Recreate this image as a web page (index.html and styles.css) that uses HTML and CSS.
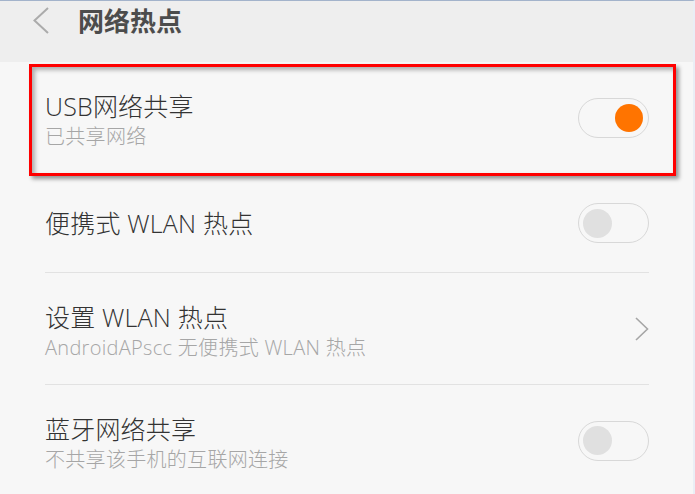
FILE: index.html
```html
<!doctype html>
<html>
    <head>
        <meta charset="utf-8">
        <title>网络热点</title>
        <link rel="stylesheet" href="styles.css">
    </head>
    <body>
        <div class="screen">
            <header class="titlebar">
                <svg class="back" width="16" height="27" viewBox="0 0 16 27">
                    <polyline points="15,1 1.5,13.5 15,26" fill="none" stroke="#ababab" stroke-width="2"/>
                </svg>
                <h1>网络热点</h1>
            </header>
            <ul class="list">
                <li class="row tall">
                    <div class="text">
                        <div class="title">USB网络共享</div>
                        <div class="summary">已共享网络</div>
                    </div>
                    <span class="switch on"><span class="knob"></span></span>
                </li>
                <li class="row">
                    <div class="text">
                        <div class="title">便携式 WLAN 热点</div>
                    </div>
                    <span class="switch"><span class="knob"></span></span>
                </li>
                <li class="row tall">
                    <div class="text">
                        <div class="title">设置 WLAN 热点</div>
                        <div class="summary">AndroidAPscc 无便携式 WLAN 热点</div>
                    </div>
                    <svg class="more" width="14" height="24" viewBox="0 0 14 24">
                        <polyline points="1,1 12.5,12 1,23" fill="none" stroke="#a6a6a6" stroke-width="1.6"/>
                    </svg>
                </li>
                <li class="row tall">
                    <div class="text">
                        <div class="title">蓝牙网络共享</div>
                        <div class="summary">不共享该手机的互联网连接</div>
                    </div>
                    <span class="switch"><span class="knob"></span></span>
                </li>
            </ul>
            <div class="highlight"></div>
        </div>
    </body>
</html>
```

FILE: styles.css
```css
html,
body {
    margin: 0;
    padding: 0;
    background-color: #f7f7f7;
}

* {
    font-family: "Open Sans", "Noto Sans CJK SC", sans-serif;
    box-sizing: border-box;
}

.screen {
    position: relative;
    width: 695px;
    height: 494px;
    overflow: hidden;
    border-top: 1px solid #a3b3cb;
    border-right: 2px solid #eaeef5;
    background-color: #f7f7f7;
}

.titlebar {
    display: flex;
    align-items: flex-start;
    height: 61px;
    padding: 6px 0 0 33px;
    background-color: #eeeeee;
}

.back {
    margin-right: 29px;
}

.titlebar h1 {
    margin: -4px 0 0;
    font-family: "Noto Sans CJK SC", sans-serif;
    font-size: 26px;
    line-height: 34px;
    font-weight: bold;
    color: #4c4c4c;
}

.list {
    list-style: none;
    margin: 0;
    padding: 0 44px 0 45px;
}

.row {
    display: flex;
    align-items: center;
    justify-content: space-between;
    height: 99px;
    border-bottom: 1px solid #e2e2e2;
}

.row.tall {
    height: 112px;
}

.tall .text {
    padding-top: 4px;
}

.title {
    font-size: 25px;
    line-height: 30px;
    font-weight: 300;
    letter-spacing: .2px;
    color: #333333;
}

.summary {
    margin-top: 4px;
    font-size: 20px;
    line-height: 24px;
    font-weight: 300;
    letter-spacing: .3px;
    color: #a6a6a6;
}

.switch {
    display: flex;
    align-items: center;
    width: 71px;
    height: 40px;
    padding: 0 5px 0 4px;
    border: 1px solid #d8d8d8;
    border-radius: 20px;
}

.knob {
    width: 29px;
    height: 29px;
    border-radius: 50%;
    background-color: #e0e0e0;
}

.switch.on {
    justify-content: flex-end;
}

.switch.on .knob {
    width: 28px;
    height: 28px;
    background-color: #ff7400;
}

.highlight {
    position: absolute;
    left: 29px;
    top: 63px;
    width: 647px;
    height: 112px;
    border: 3px solid #ff0000;
    box-shadow: 3px 3px 4px rgba(0, 0, 0, .4), inset 3px 3px 4px rgba(0, 0, 0, .3);
}
```
